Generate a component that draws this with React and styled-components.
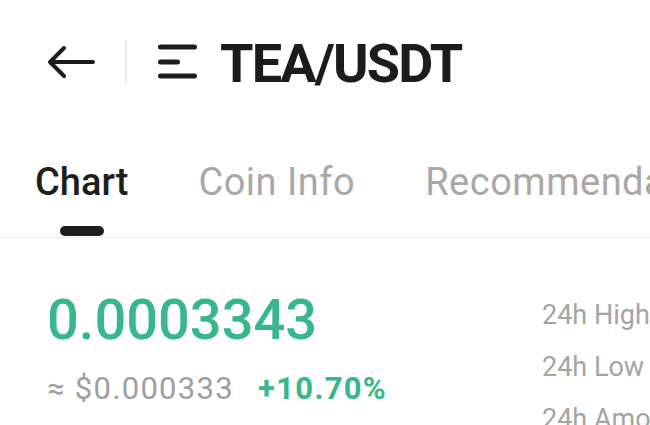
import React from 'react'
import styled, { createGlobalStyle } from 'styled-components'

const GlobalStyle = createGlobalStyle`
  body {
    margin: 0;
    background: #ffffff;
    font-family: Roboto, "Noto Sans", sans-serif;
    overflow: hidden;
  }
`

const Page = styled.div`
  width: 650px;
  height: 425px;
  overflow: hidden;
  background: #fff;
`

const Header = styled.header`
  height: 124px;
  display: flex;
  align-items: center;
  padding-left: 46px;
`

const IconBox = styled.svg`
  display: block;
  flex: none;
`

const Divider = styled.span`
  width: 2px;
  height: 44px;
  background: #ececec;
  margin: 0 28px 0 27px;
`

const Title = styled.h1`
  margin: 3px 0 0 20px;
  font-size: 54px;
  line-height: 1;
  font-weight: 700;
  letter-spacing: -1.8px;
  color: #1c1c1c;
`

const TabBar = styled.nav`
  display: flex;
  gap: 70px;
  padding: 39px 0 1px 35px;
  border-bottom: 1px solid #ededed;
  white-space: nowrap;
`

const Tab = styled.div`
  display: flex;
  flex-direction: column;
  align-items: center;
  font-size: 38px;
  line-height: 1;
  font-weight: ${p => (p.$active ? 500 : 400)};
  letter-spacing: ${p => (p.$active ? '0' : '0.5px')};
  color: ${p => (p.$active ? '#1e1e1e' : '#a8a8a8')};
`

const Indicator = styled.span`
  width: 44px;
  height: 10px;
  border-radius: 5px;
  margin-top: 25px;
  background: ${p => (p.$show ? '#1e1e1e' : 'transparent')};
`

const Ticker = styled.section`
  display: flex;
  padding: 54px 0 0 47px;
`

const PriceCol = styled.div`
  width: 495px;
  flex: none;
`

const Price = styled.div`
  font-size: 56px;
  line-height: 1;
  font-weight: 500;
  color: #38b78a;
`

const SubLine = styled.div`
  margin-top: 25px;
  display: flex;
  gap: 24px;
  font-size: 31px;
  line-height: 1;
  letter-spacing: 1.3px;
  white-space: nowrap;
`

const Fiat = styled.span`
  color: #9e9e9e;
`

const Change = styled.span`
  color: #38b78a;
  font-weight: 700;
`

const StatsCol = styled.div`
  display: flex;
  flex-direction: column;
  gap: 25px;
  padding-top: 10px;
  white-space: nowrap;
`

const StatLabel = styled.span`
  font-size: 27px;
  line-height: 1;
  color: #a4a4a4;
`

export default function App() {
  return (
    <Page>
      <GlobalStyle />
      <Header>
        <IconBox width="52" height="40" viewBox="0 0 52 40">
          <path d="M47 20 H4 M18 6 L4 20 L18 34" fill="none" stroke="#1c1c1c" strokeWidth="4" strokeLinecap="round" strokeLinejoin="round" />
        </IconBox>
        <Divider />
        <IconBox width="45" height="40" viewBox="0 0 45 40">
          <path d="M5.5 5 H39.5 M5.5 20 H22.5 M5.5 34 H39.5" fill="none" stroke="#1c1c1c" strokeWidth="5" strokeLinecap="round" />
        </IconBox>
        <Title>TEA/USDT</Title>
      </Header>
      <TabBar>
        {['Chart', 'Coin Info', 'Recommendations'].map((t, i) => (
          <Tab key={t} $active={i === 0}>
            {t}
            <Indicator $show={i === 0} />
          </Tab>
        ))}
      </TabBar>
      <Ticker>
        <PriceCol>
          <Price>0.0003343</Price>
          <SubLine>
            <Fiat>≈ $0.000333</Fiat>
            <Change>+10.70%</Change>
          </SubLine>
        </PriceCol>
        <StatsCol>
          <StatLabel>24h High</StatLabel>
          <StatLabel>24h Low</StatLabel>
          <StatLabel>24h Amount</StatLabel>
        </StatsCol>
      </Ticker>
    </Page>
  )
}
